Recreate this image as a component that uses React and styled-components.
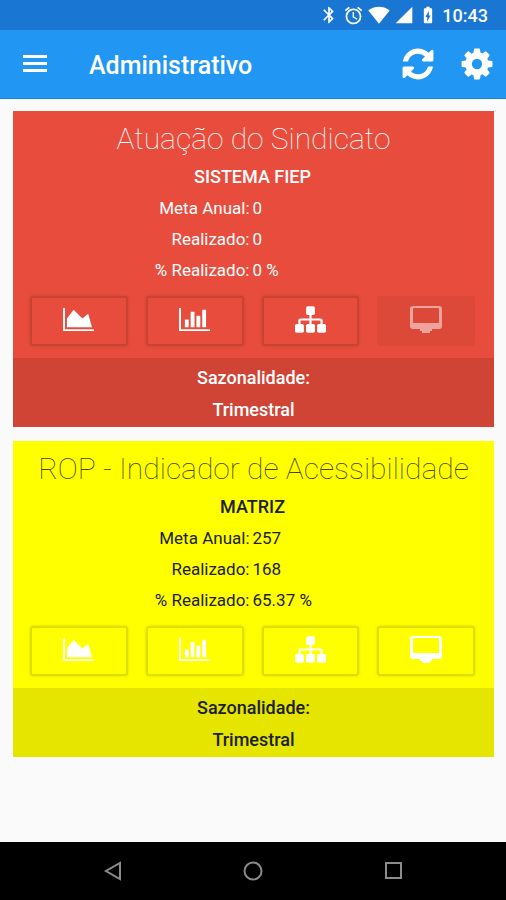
import React from 'react'
import styled, { createGlobalStyle } from 'styled-components'
import {
  MdAlarm,
  MdBatteryChargingFull,
  MdBluetooth,
  MdSignalCellular4Bar,
  MdSignalWifi4Bar,
} from 'react-icons/md'

const GlobalStyle = createGlobalStyle`
  * {
    box-sizing: border-box;
  }
  body {
    margin: 0;
    background: #fafafa;
    font-family: Roboto, sans-serif;
  }
`

const Screen = styled.div`
  display: flex;
  flex-direction: column;
  min-height: 100vh;
`

const StatusBar = styled.div`
  display: flex;
  align-items: center;
  justify-content: flex-end;
  height: 30px;
  padding: 0 18px;
  background: #1976d2;
  color: #fff;
  font-size: 18px;
  font-weight: 500;

  svg {
    display: block;
  }
`

const StatusIcons = styled.div`
  display: flex;
  align-items: center;
  gap: 4px;
  margin-right: 4px;
`

const AppBar = styled.header`
  display: flex;
  align-items: center;
  height: 69px;
  padding: 0 11px 0 22px;
  background: #2196f3;
  border-bottom: 1px solid #1583dc;
  color: #fff;
`

const AppTitle = styled.h1`
  flex: 1;
  margin: 3px 0 0 41px;
  font-size: 25px;
  line-height: 32px;
  font-weight: 500;
`

const IconButton = styled.button`
  display: flex;
  padding: 0;
  border: 0;
  background: none;
  color: inherit;

  & + & {
    margin-left: 23px;
  }
`

const Content = styled.main`
  display: flex;
  flex: 1;
  flex-direction: column;
  gap: 14px;
  padding: 12px 12px 12px 13px;
`

const Card = styled.section`
  background: ${({ $tone }) => tones[$tone].background};
  color: ${({ $tone }) => tones[$tone].text};
  text-align: center;
`

const CardBody = styled.div`
  padding: 9px 19px 12px 17px;
`

const CardTitle = styled.h2`
  margin: 0 -19px 0 -17px;
  font-size: 30px;
  line-height: 38px;
  font-weight: 100;
  color: ${({ $tone }) => tones[$tone].title};
`

const Branch = styled.p`
  margin: 3px 0 0;
  font-size: 18px;
  line-height: 32px;
  font-weight: 500;
`

const Figures = styled.dl`
  display: grid;
  grid-template-columns: 1fr 1fr;
  margin: 0;
  font-size: 17px;
  line-height: 31px;

  dt {
    padding-right: 3px;
    text-align: right;
  }
  dd {
    margin: 0;
    text-align: left;
  }
`

const Actions = styled.div`
  display: grid;
  grid-template-columns: repeat(4, 1fr);
  gap: 18px;
  margin-top: 10px;
`

const ActionButton = styled.button`
  display: flex;
  align-items: center;
  justify-content: center;
  height: 50px;
  padding: 0 0 3px;
  border: 2px solid rgba(0, 0, 0, 0.13);
  border-radius: 3px;
  background: none;
  box-shadow: 0 0 3px rgba(0, 0, 0, 0.15);
  color: #fff;

  &:disabled {
    border-color: transparent;
    background: rgba(0, 0, 0, 0.04);
    box-shadow: none;
    color: rgba(255, 255, 255, 0.5);
  }
`

const Season = styled.footer`
  padding: 4px 0 1px;
  background: rgba(0, 0, 0, 0.1);
  font-size: 18px;
  line-height: 32px;
  font-weight: 500;

  p {
    margin: 0;
  }
`

const NavBar = styled.nav`
  display: flex;
  align-items: center;
  justify-content: center;
  gap: 116px;
  height: 58px;
  background: #000;
  color: #8c8c8c;
`

const NavButton = styled(IconButton)`
  & + & {
    margin-left: 0;
  }
`

const tones = {
  danger: { background: '#e74c3c', text: '#fff', title: '#fff' },
  warning: { background: '#ffff00', text: '#1a2030', title: '#44440a' },
}

const MenuIcon = () => (
  <svg width="26" height="20" viewBox="0 0 26 20" fill="currentColor">
    <path d="M1 1h24v3H1zM1 8h24v3H1zM1 15h24v3H1z" />
  </svg>
)

const RefreshIcon = () => (
  <svg width="36" height="36" viewBox="0 0 1792 1792" fill="currentColor">
    <path d="M1639 1056q0 5-1 7-64 268-268 434.5t-478 166.5q-146 0-282.5-55t-243.5-157l-129 129q-19 19-45 19t-45-19-19-45v-448q0-26 19-45t45-19h448q26 0 45 19t19 45-19 45l-137 137q71 66 161 102t187 36q134 0 250-65t186-179q11-17 53-117 8-23 30-23h192q13 0 22.5 9.5t9.5 22.5zm25-800v448q0 26-19 45t-45 19h-448q-26 0-45-19t-19-45 19-45l138-138q-148-137-349-137-134 0-250 65t-186 179q-11 17-53 117-8 23-30 23h-199q-13 0-22.5-9.5t-9.5-22.5v-7q65-268 270-434.5t480-166.5q146 0 284 55.5t245 156.5l130-129q19-19 45-19t45 19 19 45z" />
  </svg>
)

const CogIcon = () => (
  <svg width="36" height="36" viewBox="0 0 1792 1792" fill="currentColor">
    <path d="M1152 896q0-106-75-181t-181-75-181 75-75 181 75 181 181 75 181-75 75-181zm512-109v222q0 12-8 23t-20 13l-185 28q-19 54-39 91 35 50 107 138 10 12 10 25t-9 23q-27 37-99 108t-94 71q-12 0-26-9l-138-108q-44 23-91 38-16 136-29 186-7 28-36 28h-222q-14 0-24.5-8.5t-11.5-21.5l-28-184q-49-16-90-37l-141 107q-10 9-25 9-14 0-25-11-126-114-165-168-7-10-7-23 0-12 8-23 15-21 51-66.5t54-70.5q-27-50-41-99l-183-27q-13-2-21-12.5t-8-23.5v-222q0-12 8-23t19-13l186-28q14-46 39-92-40-57-107-138-10-12-10-24 0-10 9-23 26-36 98.5-107.5t94.5-71.5q13 0 26 10l138 107q44-23 91-38 16-136 29-186 7-28 36-28h222q14 0 24.5 8.5t11.5 21.5l28 184q49 16 90 37l142-107q9-9 24-9 13 0 25 10 129 119 165 170 7 8 7 22 0 12-8 23-15 21-51 66.5t-54 70.5q26 50 41 98l183 28q13 2 21 12.5t8 23.5z" />
  </svg>
)

const AreaChartIcon = () => (
  <svg width="31" height="27" viewBox="0 0 2048 1792" fill="currentColor">
    <path d="M2048 1536v128h-2048v-1536h128v1408h1920zm-384-1024l256 896h-1664v-576l448-576 576 576z" />
  </svg>
)

const BarChartIcon = () => (
  <svg width="31" height="27" viewBox="0 0 2048 1792" fill="currentColor">
    <path d="M640 896v512h-256v-512h256zm384-512v1024h-256v-1024h256zm1024 1152v128h-2048v-1536h128v1408h1920zm-640-896v768h-256v-768h256zm384-384v1152h-256v-1152h256z" />
  </svg>
)

const SitemapIcon = () => (
  <svg width="31" height="31" viewBox="0 0 1792 1792" fill="currentColor">
    <path d="M1792 1248v320q0 40-28 68t-68 28h-320q-40 0-68-28t-28-68v-320q0-40 28-68t68-28h96v-192h-512v192h96q40 0 68 28t28 68v320q0 40-28 68t-68 28h-320q-40 0-68-28t-28-68v-320q0-40 28-68t68-28h96v-192h-512v192h96q40 0 68 28t28 68v320q0 40-28 68t-68 28h-320q-40 0-68-28t-28-68v-320q0-40 28-68t68-28h96v-192q0-52 38-90t90-38h512v-192h-96q-40 0-68-28t-28-68v-320q0-40 28-68t68-28h320q40 0 68 28t28 68v320q0 40-28 68t-68 28h-96v192h512q52 0 90 38t38 90v192h96q40 0 68 28t28 68z" />
  </svg>
)

const DesktopIcon = () => (
  <svg width="32" height="28" viewBox="0 0 32 28" fill="currentColor">
    <path
      fillRule="evenodd"
      d="M3 0h26a3 3 0 0 1 3 3v17a3 3 0 0 1-3 3h-7v2h-2v2h-8v-2h-2v-2H3a3 3 0 0 1-3-3V3a3 3 0 0 1 3-3zm1 2a1 1 0 0 0-1 1v14h26V3a1 1 0 0 0-1-1z"
    />
  </svg>
)

const actions = [
  { id: 'area', label: 'Gráfico de área', Icon: AreaChartIcon },
  { id: 'bar', label: 'Gráfico de barras', Icon: BarChartIcon },
  { id: 'tree', label: 'Estrutura', Icon: SitemapIcon },
  { id: 'desktop', label: 'Painel', Icon: DesktopIcon },
]

const indicators = [
  {
    id: 1,
    tone: 'danger',
    title: 'Atuação do Sindicato',
    branch: 'SISTEMA FIEP',
    goal: '0',
    done: '0',
    percent: '0 %',
    season: 'Trimestral',
    disabled: ['desktop'],
  },
  {
    id: 2,
    tone: 'warning',
    title: 'ROP - Indicador de Acessibilidade',
    branch: 'MATRIZ',
    goal: '257',
    done: '168',
    percent: '65.37 %',
    season: 'Trimestral',
    disabled: [],
  },
]

const IndicatorCard = ({ indicator }) => (
  <Card $tone={indicator.tone}>
    <CardBody>
      <CardTitle $tone={indicator.tone}>{indicator.title}</CardTitle>
      <Branch>{indicator.branch}</Branch>
      <Figures>
        <dt>Meta Anual:</dt>
        <dd>{indicator.goal}</dd>
        <dt>Realizado:</dt>
        <dd>{indicator.done}</dd>
        <dt>% Realizado:</dt>
        <dd>{indicator.percent}</dd>
      </Figures>
      <Actions>
        {actions.map(({ id, label, Icon }) => (
          <ActionButton
            key={id}
            type="button"
            aria-label={label}
            disabled={indicator.disabled.includes(id)}
          >
            <Icon />
          </ActionButton>
        ))}
      </Actions>
    </CardBody>
    <Season>
      <p>Sazonalidade:</p>
      <p>{indicator.season}</p>
    </Season>
  </Card>
)

const App = () => (
  <Screen>
    <GlobalStyle />
    <StatusBar>
      <StatusIcons>
        <MdBluetooth size={20} />
        <MdAlarm size={21} />
        <MdSignalWifi4Bar size={22} />
        <MdSignalCellular4Bar size={20} />
        <MdBatteryChargingFull size={20} />
      </StatusIcons>
      <span>10:43</span>
    </StatusBar>
    <AppBar>
      <IconButton type="button" aria-label="Menu">
        <MenuIcon />
      </IconButton>
      <AppTitle>Administrativo</AppTitle>
      <IconButton type="button" aria-label="Atualizar">
        <RefreshIcon />
      </IconButton>
      <IconButton type="button" aria-label="Configurações">
        <CogIcon />
      </IconButton>
    </AppBar>
    <Content>
      {indicators.map(indicator => (
        <IndicatorCard key={indicator.id} indicator={indicator} />
      ))}
    </Content>
    <NavBar>
      <NavButton type="button" aria-label="Voltar">
        <svg width="24" height="24" viewBox="0 0 24 24" fill="none" stroke="currentColor" strokeWidth="2">
          <path d="M19 4v16L5 12z" />
        </svg>
      </NavButton>
      <NavButton type="button" aria-label="Início">
        <svg width="24" height="24" viewBox="0 0 24 24" fill="none" stroke="currentColor" strokeWidth="2">
          <circle cx="12" cy="12" r="8.500" />
        </svg>
      </NavButton>
      <NavButton type="button" aria-label="Recentes">
        <svg width="24" height="24" viewBox="0 0 24 24" fill="none" stroke="currentColor" strokeWidth="2">
          <rect x="5" y="4" width="15" height="15" />
        </svg>
      </NavButton>
    </NavBar>
  </Screen>
)

export default App
